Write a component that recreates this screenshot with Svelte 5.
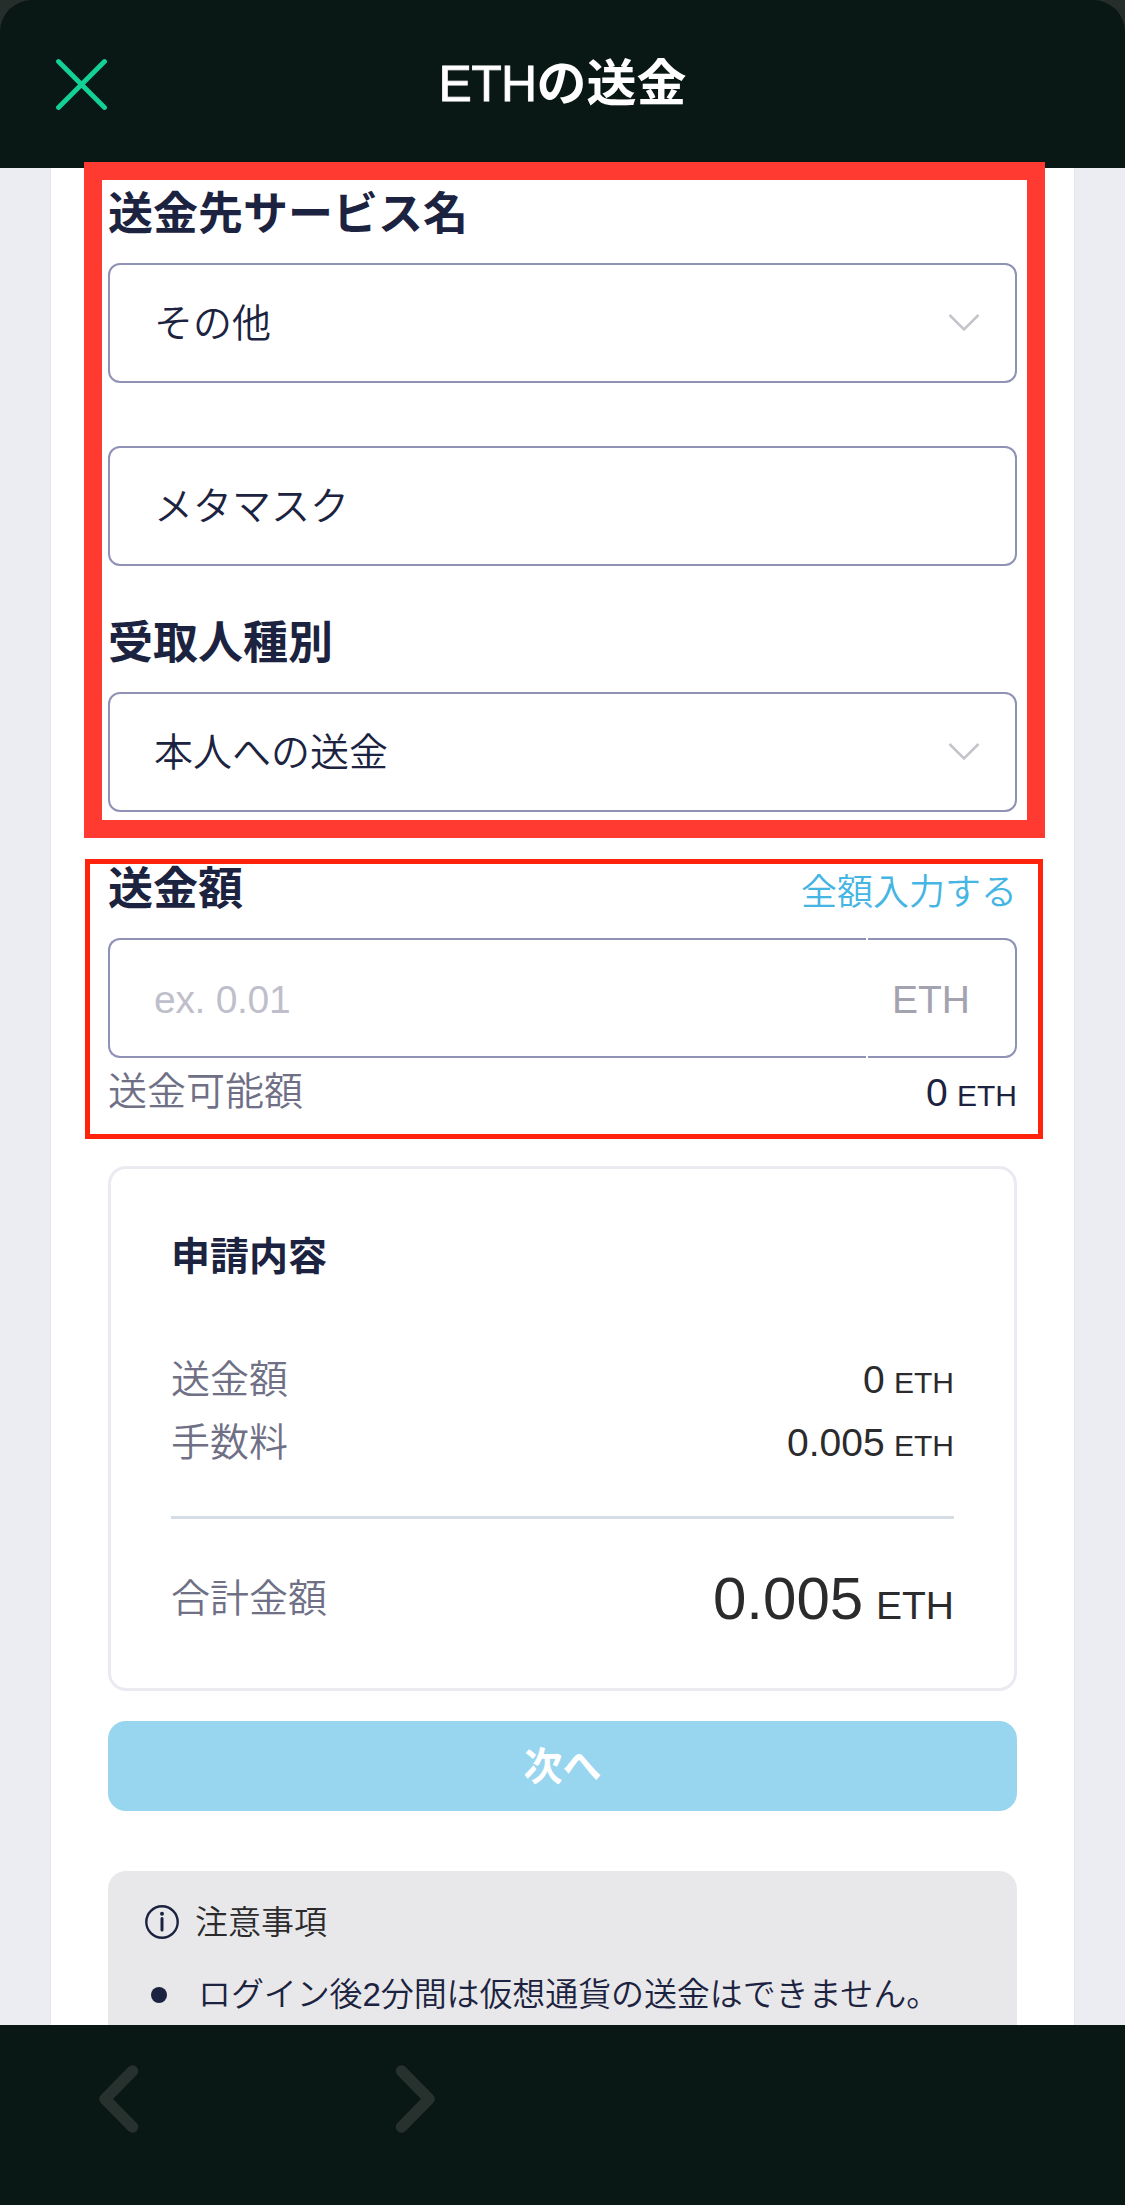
<script lang="ts">
  const summary = [
    { label: '送金額', value: '0' },
    { label: '手数料', value: '0.005' }
  ];
  const notices = ['ログイン後2分間は仮想通貨の送金はできません。'];

  let service = 'メタマスク';
  let amount = '';
</script>

<div class="screen">
  <div class="backdrop">
    <header class="header">
      <button class="close" aria-label="閉じる">
        <svg width="52" height="52" viewBox="0 0 52 52" fill="none" stroke="#13d097" stroke-width="4.8" stroke-linecap="round">
          <path d="M3.5 3.5 49.5 49.5M49.5 3.5 3.5 49.5" />
        </svg>
      </button>
      <h1><span>ETH</span><b>の送金</b></h1>
    </header>
  </div>

  <main class="body">
    <div class="sheet">
      <h2>送金先サービス名</h2>
      <button class="field">
        <span>その他</span>
        <svg class="caret" width="32" height="20" viewBox="0 0 32 20" fill="none" stroke="#c4c4cc" stroke-width="2.6">
          <path d="M1.5 2 16 16.5 30.5 2" />
        </svg>
      </button>
      <input class="field second" aria-label="サービス名" bind:value={service} />

      <h2>受取人種別</h2>
      <button class="field">
        <span>本人への送金</span>
        <svg class="caret" width="32" height="20" viewBox="0 0 32 20" fill="none" stroke="#c4c4cc" stroke-width="2.6">
          <path d="M1.5 2 16 16.5 30.5 2" />
        </svg>
      </button>

      <div class="heading-row">
        <h2>送金額</h2>
        <a class="all" href="#all">全額入力する</a>
      </div>
      <div class="group">
        <input class="field amount" placeholder="ex. 0.01" aria-label="送金額" bind:value={amount} />
        <span class="field unit">ETH</span>
      </div>
      <div class="available">
        <span class="label">送金可能額</span>
        <span class="value navy">0<small>&nbsp;ETH</small></span>
      </div>

      <section class="card">
        <h3>申請内容</h3>
        {#each summary as row (row.label)}
          <div class="row">
            <span class="label">{row.label}</span>
            <span class="value">{row.value}<small>&nbsp;ETH</small></span>
          </div>
        {/each}
        <hr />
        <div class="row total">
          <span class="label">合計金額</span>
          <span class="value">0.005<small>&nbsp;ETH</small></span>
        </div>
      </section>

      <button class="next">次へ</button>

      <section class="notice">
        <div class="notice__head">
          <svg width="36" height="36" viewBox="0 0 36 36" fill="none" stroke="#1c2340">
            <circle cx="18" cy="18" r="15.7" stroke-width="2.4" />
            <path d="M18 14.5V26" stroke-width="3" stroke-linecap="round" />
            <circle cx="18" cy="9.7" r="2" fill="#1c2340" stroke="none" />
          </svg>
          <span>注意事項</span>
        </div>
        <ul>
          {#each notices as n}
            <li>{n}</li>
          {/each}
        </ul>
      </section>
    </div>
  </main>

  <footer class="footer">
    <button aria-label="戻る">
      <svg width="42" height="72" viewBox="0 0 42 72" fill="none" stroke="#27312e" stroke-width="11.5" stroke-linecap="round" stroke-linejoin="round">
        <path d="M35.5 8 8 36 35.5 64" />
      </svg>
    </button>
    <button aria-label="進む">
      <svg width="42" height="72" viewBox="0 0 42 72" fill="none" stroke="#27312e" stroke-width="11.5" stroke-linecap="round" stroke-linejoin="round">
        <path d="M7.5 8 35 36 7.5 64" />
      </svg>
    </button>
  </footer>

  <div class="mark mark--thick"></div>
  <div class="mark mark--thin"></div>
</div>

<style>
  :global(body) { margin: 0; }

  .screen {
    position: relative; display: flex; flex-direction: column;
    width: 1125px; height: 2205px; overflow: hidden;
    font-family: "Liberation Sans", "Noto Sans CJK JP", sans-serif; font-weight: 350;
    color: #1c2340; background: #ecedf3;
  }
  .screen * { box-sizing: border-box; }
  button, input { font: inherit; color: inherit; margin: 0; }
  button { border: 0; background: none; padding: 0; }
  svg { display: block; flex: none; }

  .backdrop { flex: none; background: #262e2b; }
  .header {
    display: grid; grid-template-columns: 160px 1fr 160px; align-items: center;
    height: 168px; background: #0a1815; border-radius: 32px 32px 0 0;
  }
  .close { padding-left: 55px; }
  h1 { margin: 0; color: #fff; font-size: 50px; line-height: 60px; font-weight: 400; text-align: center; }
  h1 span { letter-spacing: -.7px; -webkit-text-stroke: .8px #fff; }
  h1 b { font-weight: 600; }

  .body { flex: 1; min-height: 0; overflow: hidden; padding: 0 50px; }
  .sheet {
    height: 100%; padding: 17px 57px 0; background: #fff;
    border: solid #e6e6ea; border-width: 0 1px;
    display: flex; flex-direction: column;
  }
  .sheet > * { flex: none; }

  h2 { margin: 0 0 18px; font-size: 45px; line-height: 60px; font-weight: 600; }
  .field {
    display: flex; align-items: center; justify-content: space-between;
    width: 100%; height: 120px; padding: 0 35px 7px 44px;
    border: 2px solid #8f91b5; border-radius: 12px; background: #fff;
    font-size: 39px; text-align: left; outline: none;
  }
  .caret { margin-top: 7px; }
  .second { margin: 63px 0 48px; }

  .heading-row { display: flex; justify-content: space-between; height: 78px; margin-top: 48px; }
  .all { color: #45b5e3; font-size: 36px; line-height: 66px; text-decoration: none; }

  .group { display: flex; gap: 2px; }
  .amount { flex: 1; width: auto; padding: 4px 0 0 44px; border-right: 0; border-radius: 12px 0 0 12px; letter-spacing: -.3px; }
  .amount::placeholder { color: #bfbfcb; opacity: 1; }
  .unit {
    width: 149px; padding: 4px 45px 0 0; justify-content: flex-end; color: #a3a3af;
    border-left: 0; border-radius: 0 12px 12px 0;
  }

  .available { display: flex; justify-content: space-between; height: 50px; margin-top: 9px; line-height: 50px; }
  .label { font-size: 39px; color: #6f7086; }
  .value { font-size: 39px; color: #2b2b2d; }
  .value small { margin-left: 1px; font-size: 30px; }
  .navy { color: #1c2340; padding-top: 1px; }

  .card {
    height: 525px; margin-top: 49px; padding: 58px 60px 0;
    border: 3px solid #e9ebf1; border-radius: 18px;
  }
  h3 { margin: 0 0 61px; font-size: 39px; line-height: 60px; font-weight: 600; }
  .row { display: flex; justify-content: space-between; height: 63px; line-height: 63px; }
  hr { height: 3px; margin: 42px 0 50px; border: 0; background: #d7dde4; }
  .total { height: 60px; line-height: 60px; }
  .total .value { font-size: 60px; }
  .total .value small { margin-left: 2px; font-size: 39px; }

  .next {
    height: 90px; margin-top: 30px; padding-bottom: 7px; border-radius: 18px;
    background: #98d5ef; color: #fff; font-size: 39px; font-weight: 600;
  }

  .notice { height: 240px; margin-top: 60px; padding: 26px 36px 0; border-radius: 18px; background: #e8e8ea; font-size: 33px; }
  .notice__head { display: flex; align-items: center; gap: 15px; height: 50px; color: #2b2b2d; }
  .notice__head span { padding-top: 1px; line-height: 50px; }
  ul { list-style: none; margin: 23px 0 0; padding: 0; }
  li { display: flex; align-items: center; gap: 31px; line-height: 50px; letter-spacing: -.1px; white-space: nowrap; }
  li::before { content: ''; width: 16px; height: 16px; margin-left: 7px; border-radius: 50%; background: #1c2340; }

  .footer { flex: none; display: flex; gap: 255px; align-items: flex-start; height: 180px; padding: 38px 97px 0; background: #0a1815; }

  .mark { position: absolute; pointer-events: none; }
  .mark--thick { left: 84px; top: 162px; width: 961px; height: 676px; border: 18px solid #ff3a30; }
  .mark--thin { left: 85px; top: 859px; width: 958px; height: 280px; border: 5px solid #ff230c; }
</style>
